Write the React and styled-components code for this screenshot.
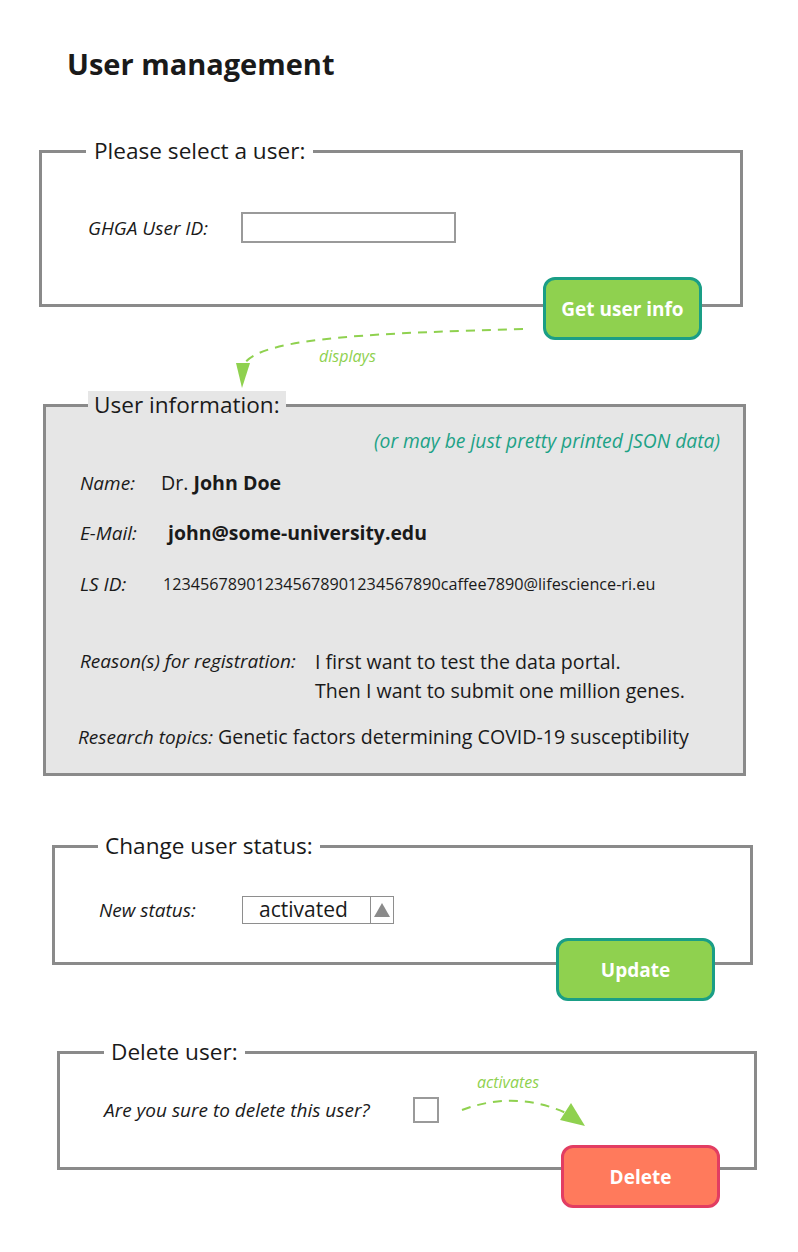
import React from 'react';
import styled, { createGlobalStyle } from 'styled-components';

const GlobalStyle = createGlobalStyle`
    body {
        margin: 0;
        background: #FFFFFF;
        font-family: 'Open Sans', 'Liberation Sans', sans-serif;
        color: #1A1A1A;
    }
`
const Page = styled.div`
    position: relative;
    width: 798px;
    min-height: 1252px;
    padding-top: 45px;
    box-sizing: border-box;
`
const Title = styled.h1`
    margin: 0 0 0 67px;
    font-size: 29px;
    line-height: 38px;
    font-weight: 700;
`
const Section = styled.section`
    margin-left: ${p => p.left}px;
    margin-top: ${p => p.top}px;
    width: ${p => p.width}px;
`
const Box = styled.fieldset`
    margin: 0;
    padding: 0 0 ${p => p.bottom}px 0;
    width: 100%;
    box-sizing: border-box;
    border: 3px solid #8A8A8A;
    background: ${p => p.filled ? '#E6E6E6' : '#FFFFFF'};
    min-width: 0;
`
const Legend = styled.legend`
    margin-left: ${p => p.offset}px;
    padding: 0 ${p => p.pad}px;
    font-size: 22.6px;
    line-height: 28px;
    color: #1A1A1A;
    background: ${p => p.filled ? '#E6E6E6' : 'transparent'};
`
const FormRow = styled.div`
    display: flex;
    align-items: center;
    margin-top: ${p => p.top}px;
    padding-left: ${p => p.indent}px;
`
const Label = styled.span`
    width: ${p => p.width}px;
    flex-shrink: 0;
    font-style: italic;
    font-size: 19px;
    line-height: 24px;
`
const TextInput = styled.input`
    width: 215px;
    height: 31px;
    box-sizing: border-box;
    border: 2px solid #9A9A9A;
    padding: 0 6px;
    font: inherit;
    background: #FFFFFF;
    outline: none;
`
const Select = styled.div`
    display: flex;
    align-items: stretch;
    width: 152px;
    height: 28px;
    box-sizing: border-box;
    border: 1.5px solid #8E8E8E;
    background: #FFFFFF;
`
const SelectValue = styled.span`
    flex: 1;
    padding-left: 16px;
    font-size: 21px;
    line-height: 25px;
`
const SelectArrow = styled.span`
    width: 22px;
    border-left: 1.5px solid #8E8E8E;
    display: flex;
    align-items: center;
    justify-content: center;
`
const Triangle = styled.span`
    width: 0;
    height: 0;
    border-left: 8px solid transparent;
    border-right: 8px solid transparent;
    border-bottom: 14px solid #8A8A8A;
`
const Checkbox = styled.span`
    display: inline-block;
    width: 26px;
    height: 26px;
    box-sizing: border-box;
    border: 2px solid #9A9A9A;
    background: #FFFFFF;
`
const Note = styled.div`
    margin-top: 10px;
    padding-right: 23px;
    text-align: right;
    font-style: italic;
    font-size: 19.3px;
    line-height: 24px;
    color: #1DA286;
`
const InfoRow = styled.div`
    display: flex;
    align-items: flex-start;
    margin-top: ${p => p.top}px;
    padding-left: ${p => p.indent || 34}px;
`
const InfoLabel = styled.span`
    width: ${p => p.width ? p.width + 'px' : 'auto'};
    flex-shrink: 0;
    font-style: italic;
    font-size: 19px;
    line-height: ${p => p.lh || 24}px;
    padding-right: ${p => p.width ? 0 : 5}px;
`
const InfoValue = styled.span`
    font-size: ${p => p.size || 19.6}px;
    line-height: ${p => p.lh || 24}px;
    font-weight: ${p => p.bold ? 700 : 400};
    white-space: nowrap;
    b { font-weight: 700; }
`
const ButtonRow = styled.div`
    display: flex;
    justify-content: flex-end;
    padding-right: ${p => p.right}px;
    margin-top: -${p => p.lift}px;
    position: relative;
`
const ActionButton = styled.button`
    width: 159px;
    height: 63px;
    border-radius: 12px;
    border: 3px solid ${p => p.danger ? '#E23D62' : '#1A9E86'};
    background: ${p => p.danger ? '#FF7A5C' : '#8FD14F'};
    color: #FFFFFF;
    font-family: 'Open Sans', 'Liberation Sans', sans-serif;
    font-weight: 700;
    font-size: 19px;
    cursor: pointer;
`
const Overlay = styled.svg`
    position: absolute;
    left: 0;
    top: 0;
    pointer-events: none;
`

function Arrows() {
    return (
        <Overlay width="798" height="1252" viewBox="0 0 798 1252">
            <path d="M523 329 C 390 333, 262 336, 244 364" fill="none" stroke="#8FD14F" strokeWidth="2" strokeDasharray="9 7" />
            <polygon points="236,363 250,363 242,388" fill="#8FD14F" />
            <text x="319" y="362" fill="#8FD14F" fontSize="16" fontStyle="italic" fontFamily="Open Sans, sans-serif">displays</text>
            <path d="M462 1110 Q 515 1090 566 1113" fill="none" stroke="#8FD14F" strokeWidth="2" strokeDasharray="9 7" />
            <polygon points="560,1120 571,1103 585,1126" fill="#8FD14F" />
            <text x="477" y="1088" fill="#8FD14F" fontSize="16" fontStyle="italic" fontFamily="Open Sans, sans-serif">activates</text>
        </Overlay>
    )
}

function App() {
    return (
        <Page>
            <GlobalStyle />
            <Title>User management</Title>

            <Section left={39} top={54} width={704}>
                <Box bottom={61}>
                    <Legend offset={44} pad={8}>Please select a user:</Legend>
                    <FormRow top={47} indent={46}>
                        <Label width={153}>GHGA User ID:</Label>
                        <TextInput type="text" />
                    </FormRow>
                </Box>
                <ButtonRow right={41} lift={30}>
                    <ActionButton>Get user info</ActionButton>
                </ButtonRow>
            </Section>

            <Section left={43} top={51} width={703}>
                <Box filled bottom={24}>
                    <Legend filled offset={42} pad={6}>User information:</Legend>
                    <Note>(or may be just pretty printed JSON data)</Note>
                    <InfoRow top={18}>
                        <InfoLabel width={81}>Name:</InfoLabel>
                        <InfoValue>Dr. <b>John Doe</b></InfoValue>
                    </InfoRow>
                    <InfoRow top={26}>
                        <InfoLabel width={88}>E-Mail:</InfoLabel>
                        <InfoValue bold size={19.4}>john@some-university.edu</InfoValue>
                    </InfoRow>
                    <InfoRow top={27}>
                        <InfoLabel width={83}>LS ID:</InfoLabel>
                        <InfoValue size={16.2}>123456789012345678901234567890caffee7890@lifescience-ri.eu</InfoValue>
                    </InfoRow>
                    <InfoRow top={51}>
                        <InfoLabel width={235} lh={29}>Reason(s) for registration:</InfoLabel>
                        <InfoValue lh={29}>I first want to test the data portal.<br />Then I want to submit one million genes.</InfoValue>
                    </InfoRow>
                    <InfoRow top={20} indent={32}>
                        <InfoLabel>Research topics:</InfoLabel>
                        <InfoValue>Genetic factors determining COVID-19 susceptibility</InfoValue>
                    </InfoRow>
                </Box>
            </Section>

            <Section left={52} top={56} width={701}>
                <Box bottom={38}>
                    <Legend offset={43} pad={7}>Change user status:</Legend>
                    <FormRow top={36} indent={44}>
                        <Label width={143}>New status:</Label>
                        <Select>
                            <SelectValue>activated</SelectValue>
                            <SelectArrow><Triangle /></SelectArrow>
                        </Select>
                    </FormRow>
                </Box>
                <ButtonRow right={38} lift={27}>
                    <ActionButton>Update</ActionButton>
                </ButtonRow>
            </Section>

            <Section left={57} top={37} width={700}>
                <Box bottom={44}>
                    <Legend offset={44} pad={7}>Delete user:</Legend>
                    <FormRow top={31} indent={44}>
                        <Label width={309}>Are you sure to delete this user?</Label>
                        <Checkbox />
                    </FormRow>
                </Box>
                <ButtonRow right={37} lift={25}>
                    <ActionButton danger>Delete</ActionButton>
                </ButtonRow>
            </Section>

            <Arrows />
        </Page>
    )
}

export default App;
